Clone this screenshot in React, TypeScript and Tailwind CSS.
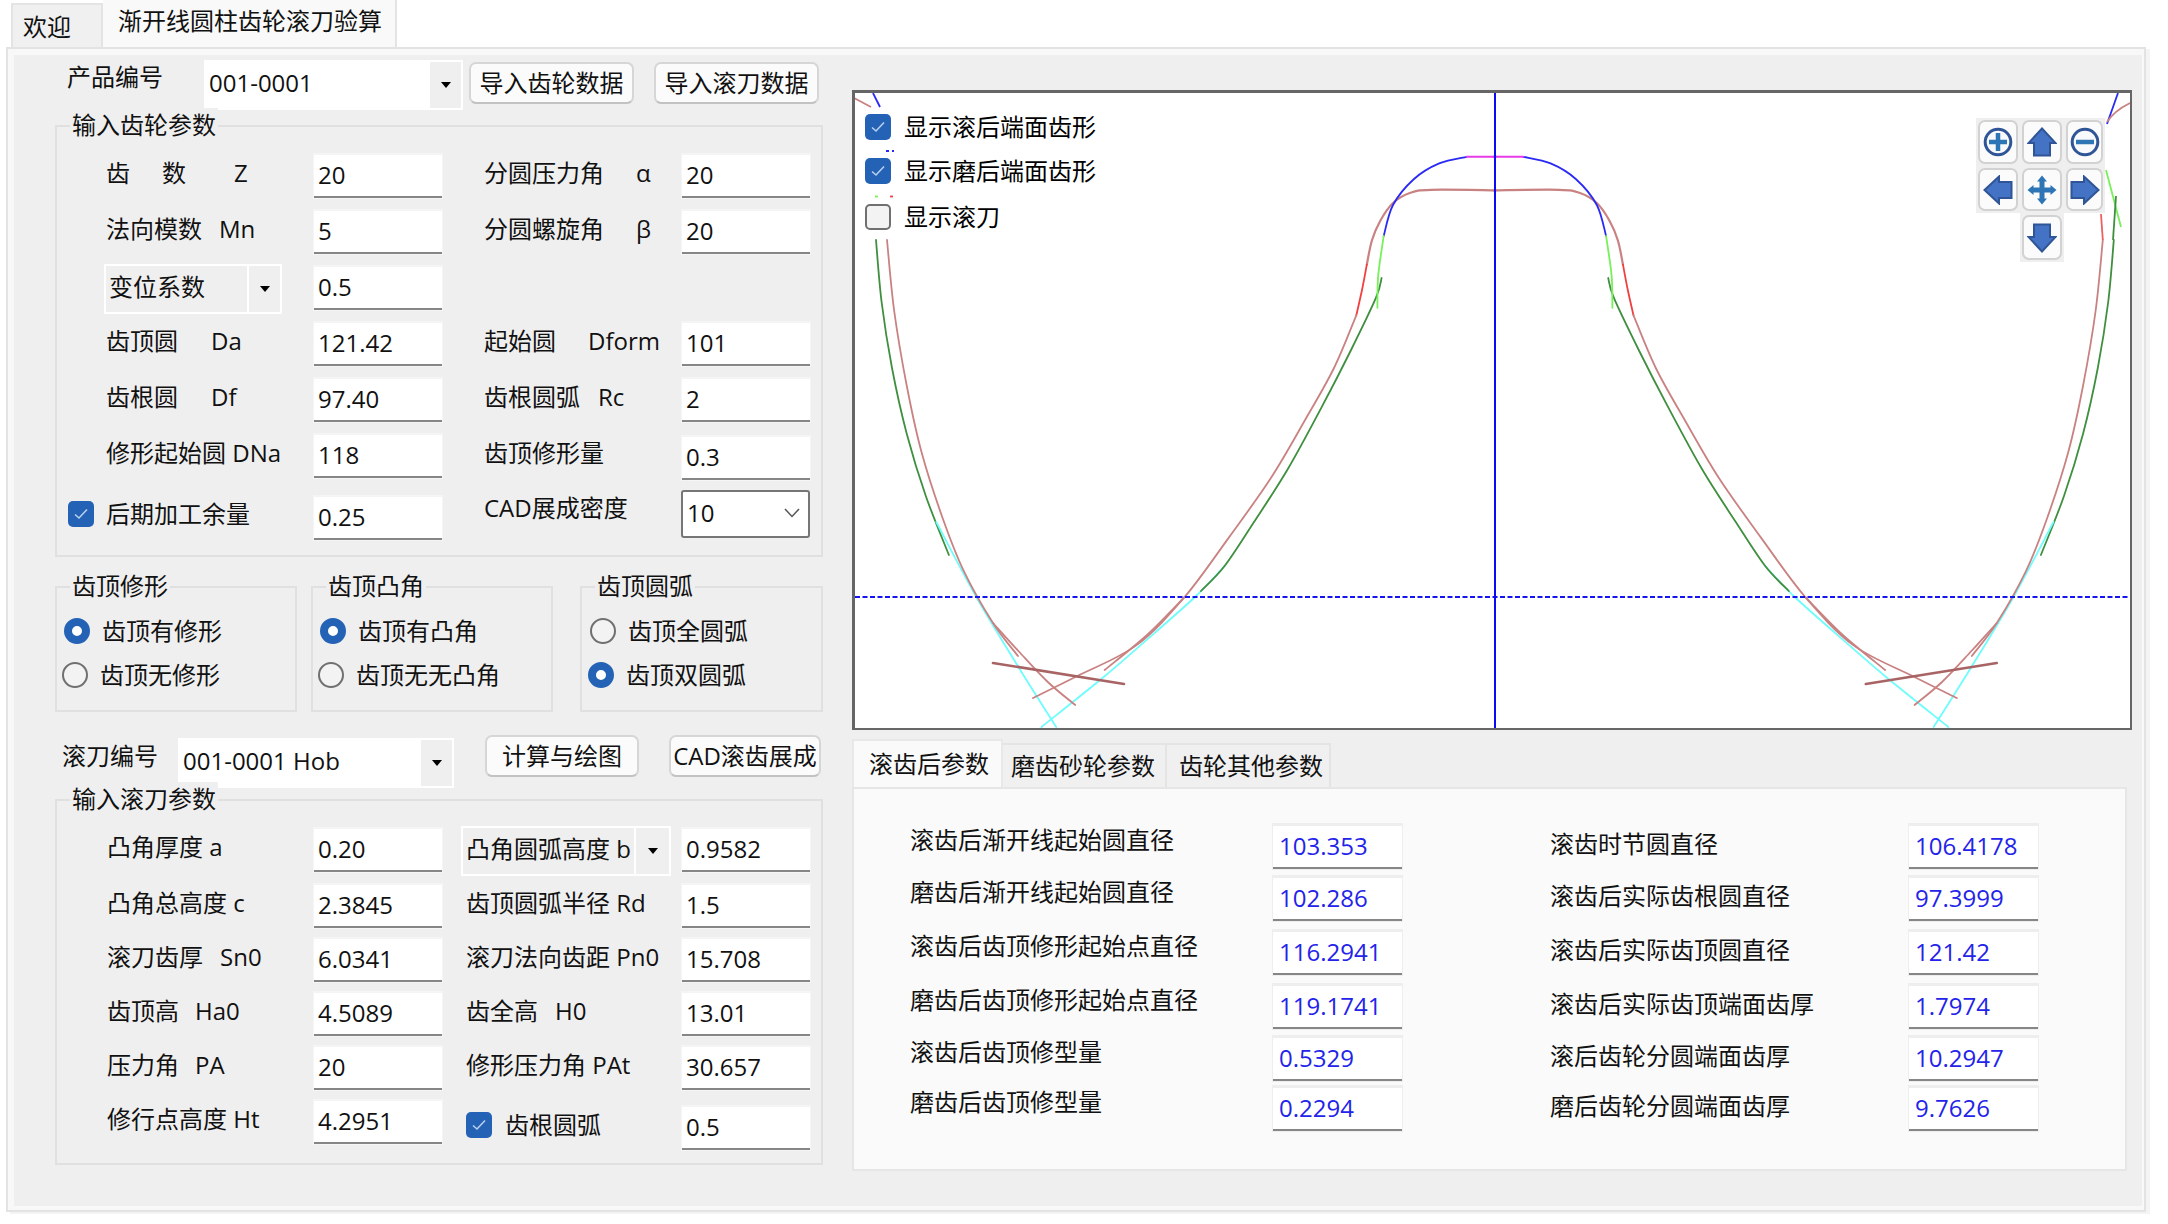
import type { ReactNode } from "react";

type Pt = [number, number];

// smooth path through the measured points
const curve = (pts: Pt[]) => {
	let d = `M${pts[0][0]} ${pts[0][1]}`;
	for (let i = 0; i < pts.length - 1; i++) {
		const p0 = pts[i - 1] ?? pts[i];
		const p1 = pts[i];
		const p2 = pts[i + 1];
		const p3 = pts[i + 2] ?? p2;
		d += ` C${p1[0] + (p2[0] - p0[0]) / 6} ${p1[1] + (p2[1] - p0[1]) / 6} ${p2[0] - (p3[0] - p1[0]) / 6} ${p2[1] - (p3[1] - p1[1]) / 6} ${p2[0]} ${p2[1]}`;
	}
	return d;
};

const BROWN = "#c98282";
const GREEN = "#3f8f3f";
const LIME = "#77f05a";
const CYAN = "#6ffcfc";
const BLUE = "#2a2af5";

function Tooth() {
	return (
		<g fill="none" strokeWidth="1.8" strokeLinecap="round">
			<path d={curve([[24, 150], [29.6, 212], [40, 278], [54.8, 344], [73.8, 406], [96.9, 465]])} stroke={GREEN} />
			<path d={curve([[84.3, 432], [124.3, 507], [166.4, 577], [204.2, 637]])} stroke={CYAN} />
			<path d={curve([[372.6, 476], [343, 507], [288.4, 555.4], [250.5, 588], [189.5, 637]])} stroke={CYAN} />
			<path d={curve([[35, 150], [42.2, 221], [54.8, 296], [69.5, 362], [90.6, 428], [111.6, 480.6], [141, 533], [166, 566]])} stroke={BROWN} />
			<path d={curve([[141, 533], [166.4, 561], [195.8, 592], [223.2, 615]])} stroke={BROWN} />
			<path d={curve([[529.6, 188], [524, 207.7], [498.8, 260.5], [469.4, 317.7], [435.7, 379.3], [402, 432], [372.6, 476], [349, 501]])} stroke={GREEN} />
			<path d={curve([[644.4, 100.3], [578.8, 99.8], [557.8, 103], [541, 113], [528.3, 130.7], [519.9, 150.5], [514.8, 174.7]])} stroke={BROWN} strokeWidth="2.2" />
			<path d={curve([[514.8, 174.7], [510, 200], [504.3, 225.3]])} stroke="#f04040" />
			<path d={curve([[504.3, 225.3], [482, 278], [452.5, 331], [418.9, 388], [376.8, 447.6], [332.6, 507], [284.2, 555.4], [225.3, 586], [181, 608]])} stroke={BROWN} />
			<path d={curve([[332.6, 507], [295, 545], [252.6, 580]])} stroke={BROWN} />
			<path d="M141 573 L272 594" stroke="#a86464" strokeWidth="2.6" />
			<path d={curve([[531.7, 146], [541, 115], [562, 89], [587.2, 73.4], [614.6, 66.8]])} stroke={BLUE} />
			<path d="M614.6 66.8 H644.4" stroke="#e83be8" strokeWidth="2" />
			<path d={curve([[531.7, 146], [526.2, 185.7], [525.4, 217.8]])} stroke={LIME} />
		</g>
	);
}

function GearPlot() {
	return (
		<svg width="1275" height="635" viewBox="0 0 1275 635" className="block">
			<g transform="translate(-3 -3)">
				<Tooth />
				<g transform="translate(1285.8 0) scale(-1 1)">
					<Tooth />
				</g>
				<g fill="none" strokeWidth="1.8">
					<path d="M2 8 L19 17" stroke={BROWN} />
					<path d="M21 3 L28 17" stroke={BLUE} />
					<path d="M34 61 H42" stroke={BLUE} strokeDasharray="3 3" />
					<path d="M23 106.5 H28" stroke={LIME} strokeDasharray="3 2" />
					<path d="M38 106.5 H41" stroke="#f04040" />
					<path d="M1266 3 L1255 34" stroke={BLUE} />
					<path d="M1278 13 Q1262 21 1255 32" stroke={BROWN} />
					<path d="M1254 80 L1269 137" stroke={LIME} />
					<path d="M1264 106 L1261 150" stroke={GREEN} />
					<path d="M1249 124 L1250.8 150" stroke="#ee6060" />
				</g>
			</g>
			<path d="M0 504 H1275" stroke="#1515f0" strokeWidth="1.8" strokeDasharray="5 2.5" />
			<path d="M640 0 V635" stroke="#0a0af5" strokeWidth="2" />
		</svg>
	);
}

function Check({ checked }: { checked: boolean }) {
	if (!checked) {
		return <span className="block w-[26px] h-[26px] shrink-0 rounded-[5px] border-2 border-[#707070] bg-[#f3f3f3]" />;
	}
	return (
		<span className="flex items-center justify-center w-[26px] h-[26px] shrink-0 rounded-[5px] bg-[#2462b6]">
			<svg width="14" height="12" viewBox="0 0 14 12" fill="none">
				<path d="M1 6.5 L5 10 L13 1.5" stroke="#b9d0ee" strokeWidth="1.6" />
			</svg>
		</span>
	);
}

function Radio({ on }: { on: boolean }) {
	if (on) {
		return <span className="block w-[26px] h-[26px] shrink-0 rounded-full border-[8px] border-[#2462b6] bg-white" />;
	}
	return <span className="block w-[26px] h-[26px] shrink-0 rounded-full border-2 border-[#707070] bg-[#f3f3f3]" />;
}

function Caret() {
	return <span className="block w-0 h-0 border-x-[5px] border-x-transparent border-t-[6px] border-t-black" />;
}

function Field({ value, className = "" }: { value: string; className?: string }) {
	return (
		<div className={`flex items-center h-[44px] w-[128px] pl-[4px] pb-[2px] bg-white border-t border-[#f4f4f4] border-b-2 border-b-[#868686] shadow-[0_0_0_1px_#f5f5f5] ${className}`}>
			{value}
		</div>
	);
}

function OutField({ value }: { value: string }) {
	return (
		<div className="flex items-center h-[45px] w-[129px] pl-[6px] pb-[2px] bg-white border-t-2 border-[#eeeeee] border-b-2 border-b-[#868686] text-[#2323ea] shadow-[0_0_0_1px_#eeeeee]">
			{value}
		</div>
	);
}

function Combo({ value, white, className = "", arrow = 33 }: { value: string; white?: boolean; className?: string; arrow?: number }) {
	return (
		<div className={`flex border-2 border-white ${white ? "bg-white" : "bg-[#efefef]"} ${className}`}>
			<div className="flex-1 flex items-center pl-[3px] pb-[5px] whitespace-pre">{value}</div>
			<div className="flex items-center justify-center bg-[#efefef] border-l-2 border-white" style={{ width: arrow }}>
				<Caret />
			</div>
		</div>
	);
}

function Btn({ children, className = "" }: { children: ReactNode; className?: string }) {
	return (
		<div className={`flex items-center justify-center rounded-[7px] bg-[#fbfbfb] border-2 border-[#d6d6d6] border-b-[#c2c2c2] whitespace-nowrap ${className}`}>
			{children}
		</div>
	);
}

function Group({ title, className = "", children }: { title: string; className?: string; children: ReactNode }) {
	return (
		<div className={`relative border-2 border-[#e0e0e0] ${className}`}>
			<span className="absolute left-[13px] -top-[19px] px-[2px] leading-[34px] bg-[#efefef]">{title}</span>
			{children}
		</div>
	);
}

function Lbl({ children, className = "" }: { children: ReactNode; className?: string }) {
	return <div className={`flex items-center h-[44px] pb-[6px] whitespace-pre ${className}`}>{children}</div>;
}

function RadioRow({ on, text, pad, gap }: { on: boolean; text: string; pad: string; gap: string }) {
	return (
		<div className={`flex items-center h-[44px] ${pad} ${gap}`}>
			<Radio on={on} />
			<span>{text}</span>
		</div>
	);
}

function NavBtn({ children, className = "" }: { children: ReactNode; className?: string }) {
	return (
		<div className={`flex items-center justify-center bg-[#efefef] p-[2px] ${className}`}>
			<div className="flex items-center justify-center w-full h-full rounded-[7px] bg-[#fbfbfb] border-2 border-[#d2d2d2]">
				{children}
			</div>
		</div>
	);
}

function Arrow({ rotate }: { rotate: string }) {
	return (
		<svg width="30" height="30" viewBox="0 0 30 30" className={rotate}>
			<path d="M15 1.5 L28.5 16 H23 V28.5 H7 V16 H1.5 Z" fill="#4472c4" stroke="#2f5597" strokeWidth="2" />
		</svg>
	);
}

function Zoom({ plus }: { plus: boolean }) {
	return (
		<svg width="30" height="30" viewBox="0 0 30 30">
			<circle cx="15" cy="15" r="12.8" fill="#f7f9fc" stroke="#2f5597" strokeWidth="3" />
			<path d="M6 15 H24" stroke="#2e75b6" strokeWidth="4.5" />
			{plus && <path d="M15 6 V24" stroke="#2e75b6" strokeWidth="4.5" />}
		</svg>
	);
}

function Move() {
	return (
		<svg width="30" height="30" viewBox="0 0 30 30" fill="#2e75b6">
			<path d="M5 15 H25 M15 5 V25" stroke="#2e75b6" strokeWidth="5" />
			<path d="M15 0.5 L20 6.5 H10 Z M15 29.5 L20 23.5 H10 Z M0.5 15 L6.5 10 V20 Z M29.5 15 L23.5 10 V20 Z" />
		</svg>
	);
}

const outputs: [string, string, string, string][] = [
	["滚齿后渐开线起始圆直径", "103.353", "滚齿时节圆直径", "106.4178"],
	["磨齿后渐开线起始圆直径", "102.286", "滚齿后实际齿根圆直径", "97.3999"],
	["滚齿后齿顶修形起始点直径", "116.2941", "滚齿后实际齿顶圆直径", "121.42"],
	["磨齿后齿顶修形起始点直径", "119.1741", "滚齿后实际齿顶端面齿厚", "1.7974"],
	["滚齿后齿顶修型量", "0.5329", "滚后齿轮分圆端面齿厚", "10.2947"],
	["磨齿后齿顶修型量", "0.2294", "磨后齿轮分圆端面齿厚", "9.7626"],
];
const outputTops = ["mt-0", "mt-[7px]", "mt-[9px]", "mt-[9px]", "mt-[7px]", "mt-[5px]"];

export default function App() {
	return (
		<div className="w-[2168px] h-[1224px] bg-white text-[24px] text-[#111111] overflow-hidden font-['Open_Sans','Noto_Sans_CJK_SC',sans-serif]">
			{/* top tabs */}
			<div className="flex items-end h-[47px] pl-[11px]">
				<div className="flex items-center h-[44px] w-[92px] pl-[10px] pt-[2px] bg-[#f0f0f0] border-2 border-b-0 border-[#e4e4e4]">欢迎</div>
				<div className="flex items-start h-[47px] w-[294px] pl-[15px] pt-[3px] bg-[#f9f9f9] border-r-2 border-[#e4e4e4]">渐开线圆柱齿轮滚刀验算</div>
			</div>

			<div className="ml-[6px] w-[2140px] h-[1165px] pl-[6px] pr-[2px] pt-[6px] pb-[4px] bg-[#f8f8f8] border-2 border-[#e3e3e3] shadow-[4px_2px_0_#f4f4f4]">
				<div className="flex w-full h-full pl-[41px] bg-[#efefef]">
					{/* left column */}
					<div className="flex flex-col w-[768px] pt-[5px]">
						<div className="flex items-start h-[50px]">
							<div className="w-[149px] pl-[12px] leading-[34px]">产品编号</div>
							<Combo value="001-0001" white className="w-[259px] h-[50px]" />
							<Btn className="ml-[6px] mt-[2px] w-[165px] h-[42px]">导入齿轮数据</Btn>
							<Btn className="ml-[20px] mt-[2px] w-[165px] h-[42px]">导入滚刀数据</Btn>
						</div>

						<Group title="输入齿轮参数" className="mt-[15px] h-[432px] pt-[27px] pl-[49px]">
							<div className="grid grid-cols-[208px_128px_42px_198px_128px] auto-rows-[56px] items-start">
								<Lbl><span className="w-[56px]">齿</span><span className="w-[72px]">数</span><span>Z</span></Lbl>
								<Field value="20" />
								<Lbl className="col-start-4"><span className="w-[152px]">分圆压力角</span><span>α</span></Lbl>
								<Field value="20" />

								<Lbl><span className="w-[113px]">法向模数</span><span>Mn</span></Lbl>
								<Field value="5" />
								<Lbl className="col-start-4"><span className="w-[152px]">分圆螺旋角</span><span>β</span></Lbl>
								<Field value="20" />

								<Combo value="变位系数" className="-ml-[2px] -mt-[2px] w-[178px] h-[50px]" arrow={33} />
								<Field value="0.5" />
								<div className="col-span-3" />

								<Lbl><span className="w-[105px]">齿顶圆</span><span>Da</span></Lbl>
								<Field value="121.42" />
								<Lbl className="col-start-4"><span className="w-[104px]">起始圆</span><span>Dform</span></Lbl>
								<Field value="101" />

								<Lbl><span className="w-[105px]">齿根圆</span><span>Df</span></Lbl>
								<Field value="97.40" />
								<Lbl className="col-start-4"><span className="w-[114px]">齿根圆弧</span><span>Rc</span></Lbl>
								<Field value="2" />

								<Lbl>修形起始圆 DNa</Lbl>
								<Field value="118" />
								<Lbl className="col-start-4">齿顶修形量</Lbl>
								<Field value="0.3" className="mt-[2px]" />
							</div>
							<div className="grid grid-cols-[208px_128px_42px_198px_128px] items-start">
								<div className="flex items-center h-[43px] mt-[2px] -ml-[38px] gap-[12px] whitespace-pre">
									<Check checked />
									<span>后期加工余量</span>
								</div>
								<Field value="0.25" className="mt-[6px]" />
								<Lbl className="col-start-4 mt-[-1px]">CAD展成密度</Lbl>
								<div className="flex items-center justify-between h-[48px] w-[129px] -ml-px pl-[4px] pr-[8px] pb-[2px] bg-white border-2 border-[#767676] rounded-[3px]">
									<span>10</span>
									<svg width="16" height="10" viewBox="0 0 16 10" fill="none"><path d="M1 1 L8 8.5 L15 1" stroke="#555555" strokeWidth="1.5" /></svg>
								</div>
							</div>
						</Group>

						<div className="flex mt-[29px]">
							<Group title="齿顶修形" className="w-[242px] h-[126px] pt-[21px]">
								<RadioRow on text="齿顶有修形" pad="pl-[7px]" gap="gap-[12px]" />
								<RadioRow on={false} text="齿顶无修形" pad="pl-[5px]" gap="gap-[12px]" />
							</Group>
							<Group title="齿顶凸角" className="ml-[14px] w-[242px] h-[126px] pt-[21px]">
								<RadioRow on text="齿顶有凸角" pad="pl-[7px]" gap="gap-[12px]" />
								<RadioRow on={false} text="齿顶无无凸角" pad="pl-[5px]" gap="gap-[12px]" />
							</Group>
							<Group title="齿顶圆弧" className="ml-[27px] w-[243px] h-[126px] pt-[21px]">
								<RadioRow on={false} text="齿顶全圆弧" pad="pl-[8px]" gap="gap-[12px]" />
								<RadioRow on text="齿顶双圆弧" pad="pl-[6px]" gap="gap-[12px]" />
							</Group>
						</div>

						<div className="flex items-start h-[64px] mt-[23px]">
							<div className="w-[123px] pl-[7px] pt-[3px] leading-[36px]">滚刀编号</div>
							<Combo value="001-0001 Hob" white className="mt-[3px] w-[276px] h-[50px]" arrow={33} />
							<Btn className="ml-[31px] w-[154px] h-[42px]">计算与绘图</Btn>
							<Btn className="ml-[30px] w-[152px] h-[42px]">CAD滚齿展成</Btn>
						</div>

						<Group title="输入滚刀参数" className="h-[366px] pt-[27px] pl-[50px]">
							<div className="grid grid-cols-[207px_128px_24px_216px_128px] auto-rows-[54px] items-start">
								<Lbl>凸角厚度 a</Lbl>
								<Field value="0.20" />
								<Combo value="凸角圆弧高度 b" className="col-start-4 -ml-[5px] -mt-[2px] w-[210px] h-[50px]" arrow={35} />
								<Field value="0.9582" />

								<Lbl className="mt-[2px]">凸角总高度 c</Lbl>
								<Field value="2.3845" className="mt-[2px]" />
								<Lbl className="col-start-4 mt-[2px]">齿顶圆弧半径 Rd</Lbl>
								<Field value="1.5" className="mt-[2px]" />

								<Lbl className="mt-[2px]"><span className="w-[113px]">滚刀齿厚</span><span>Sn0</span></Lbl>
								<Field value="6.0341" className="mt-[2px]" />
								<Lbl className="col-start-4 mt-[2px]">滚刀法向齿距 Pn0</Lbl>
								<Field value="15.708" className="mt-[2px]" />

								<Lbl className="mt-[2px]"><span className="w-[88px]">齿顶高</span><span>Ha0</span></Lbl>
								<Field value="4.5089" className="mt-[2px]" />
								<Lbl className="col-start-4 mt-[2px]"><span className="w-[89px]">齿全高</span><span>H0</span></Lbl>
								<Field value="13.01" className="mt-[2px]" />

								<Lbl className="mt-[2px]"><span className="w-[88px]">压力角</span><span>PA</span></Lbl>
								<Field value="20" className="mt-[2px]" />
								<Lbl className="col-start-4 mt-[2px]">修形压力角 PAt</Lbl>
								<Field value="30.657" className="mt-[2px]" />

								<Lbl className="mt-[2px]">修行点高度 Ht</Lbl>
								<Field value="4.2951" className="mt-[2px]" />
								<div className="col-start-4 flex items-center gap-[13px] h-[44px] mt-[5px] whitespace-pre">
									<Check checked />
									<span>齿根圆弧</span>
								</div>
								<Field value="0.5" className="mt-[8px]" />
							</div>
						</Group>
					</div>

					{/* right column */}
					<div className="flex flex-col ml-[29px] pt-[35px]">
						<div className="relative w-[1280px] h-[640px] bg-white border-2 border-l-[3px] border-t-[3px] border-[#666666]">
							<GearPlot />
							<div className="absolute left-[10px] top-[21px] flex flex-col">
								{["显示滚后端面齿形", "显示磨后端面齿形", "显示滚刀"].map((t, i) => (
									<div key={t} className={`flex items-center gap-[13px] h-[26px] text-black ${i === 0 ? "" : i === 1 ? "mt-[18px]" : "mt-[20px]"}`}>
										<Check checked={i < 2} />
										<span>{t}</span>
									</div>
								))}
							</div>
							<div className="absolute left-[1121px] top-[25px] grid grid-cols-[44px_44px_41px] grid-rows-[48px_47px_49px]">
								<NavBtn><Zoom plus /></NavBtn>
								<NavBtn><Arrow rotate="rotate-0" /></NavBtn>
								<NavBtn><Zoom plus={false} /></NavBtn>
								<NavBtn><Arrow rotate="-rotate-90" /></NavBtn>
								<NavBtn><Move /></NavBtn>
								<NavBtn><Arrow rotate="rotate-90" /></NavBtn>
								<NavBtn className="col-start-2"><Arrow rotate="rotate-180" /></NavBtn>
							</div>
						</div>

						<div className="flex items-end h-[48px] mt-[9px]">
							<div className="flex items-start w-[151px] h-[48px] pl-[15px] pt-[5px] bg-[#fafafa] border-t-2 border-x-2 border-[#e8e8e8]">滚齿后参数</div>
							<div className="flex items-center w-[164px] h-[44px] pl-[8px] pb-[1px] bg-[#f0f0f0] border-t-2 border-r-2 border-[#e4e4e4]">磨齿砂轮参数</div>
							<div className="flex items-center w-[164px] h-[44px] pl-[12px] pb-[1px] bg-[#f0f0f0] border-t-2 border-r-2 border-[#e4e4e4]">齿轮其他参数</div>
						</div>
						<div className="w-[1275px] h-[384px] pt-[33px] pl-[56px] bg-[#fafafa] border-2 border-[#e6e6e6]">
							{outputs.map((r, i) => (
								<div key={r[0]} className={`grid grid-cols-[363px_129px_148px_359px_129px] items-center h-[45px] ${outputTops[i]}`}>
									<div className="pb-[13px]">{r[0]}</div>
									<OutField value={r[1]} />
									<div className="col-start-4 pb-[6px]">{r[2]}</div>
									<OutField value={r[3]} />
								</div>
							))}
						</div>
					</div>
				</div>
			</div>
		</div>
	);
}
